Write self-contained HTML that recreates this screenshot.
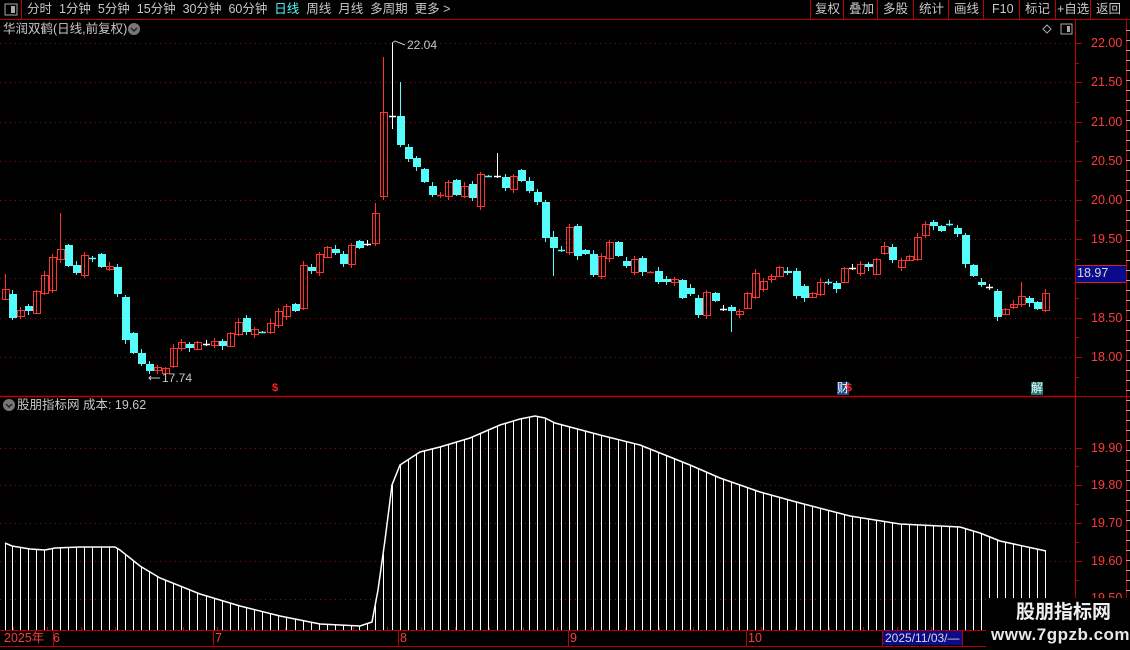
<!DOCTYPE html>
<html><head><meta charset="utf-8">
<style>
html,body{margin:0;padding:0;background:#000;}
body{width:1130px;height:650px;overflow:hidden;position:relative;font-family:"Liberation Sans","Noto Sans CJK SC",sans-serif;}
.t{position:absolute;white-space:nowrap;font-size:12px;line-height:14px;}
svg{position:absolute;left:0;top:0;}
</style></head><body>
<svg id="s" width="1130" height="650" xmlns="http://www.w3.org/2000/svg"></svg>

<div class="t" style="left:27px;top:2px;color:#c8c8c8;font-size:12.5px;word-spacing:0">分时&nbsp; 1分钟&nbsp; 5分钟&nbsp; 15分钟&nbsp; 30分钟&nbsp; 60分钟&nbsp; <span style="color:#54fcfc">日线</span>&nbsp; 周线&nbsp; 月线&nbsp; 多周期&nbsp; 更多 &gt;</div>
<div class="t" style="left:815px;top:2px;color:#c8c8c8;font-size:12.5px">复权</div>
<div class="t" style="left:849px;top:2px;color:#c8c8c8;font-size:12.5px">叠加</div>
<div class="t" style="left:883px;top:2px;color:#c8c8c8;font-size:12.5px">多股</div>
<div class="t" style="left:919px;top:2px;color:#c8c8c8;font-size:12.5px">统计</div>
<div class="t" style="left:954px;top:2px;color:#c8c8c8;font-size:12.5px">画线</div>
<div class="t" style="left:992px;top:2px;color:#c8c8c8;font-size:12.5px">F10</div>
<div class="t" style="left:1025px;top:2px;color:#c8c8c8;font-size:12.5px">标记</div>
<div class="t" style="left:1057px;top:2px;color:#c8c8c8;font-size:12.5px">+自选</div>
<div class="t" style="left:1096px;top:2px;color:#c8c8c8;font-size:12.5px">返回</div>

<div class="t" style="left:3px;top:22px;color:#c8c8c8;font-size:12.5px">华润双鹤(日线,前复权)</div>
<div class="t" style="left:17px;top:398px;color:#c8c8c8;font-size:12.5px">股朋指标网 成本: 19.62</div>

<div class="t" style="left:407px;top:38px;color:#c8c8c8;font-size:12px">22.04</div>
<div class="t" style="left:162px;top:371px;color:#c8c8c8;font-size:12px">17.74</div>

<div class="t" style="left:1091px;top:36px;color:#ff3b3b;font-size:12.5px">22.00</div>
<div class="t" style="left:1091px;top:75px;color:#ff3b3b;font-size:12.5px">21.50</div>
<div class="t" style="left:1091px;top:115px;color:#ff3b3b;font-size:12.5px">21.00</div>
<div class="t" style="left:1091px;top:154px;color:#ff3b3b;font-size:12.5px">20.50</div>
<div class="t" style="left:1091px;top:193px;color:#ff3b3b;font-size:12.5px">20.00</div>
<div class="t" style="left:1091px;top:232px;color:#ff3b3b;font-size:12.5px">19.50</div>
<div class="t" style="left:1091px;top:311px;color:#ff3b3b;font-size:12.5px">18.50</div>
<div class="t" style="left:1091px;top:350px;color:#ff3b3b;font-size:12.5px">18.00</div>
<div style="position:absolute;left:1076px;top:265px;width:50px;height:16px;background:#0a0a8a;border-top:1px solid #d02020;border-bottom:1px solid #d02020"></div>
<div class="t" style="left:1077px;top:266px;color:#d8d8d8;font-size:12.5px">18.97</div>

<div class="t" style="left:1091px;top:441px;color:#ff3b3b;font-size:12.5px">19.90</div>
<div class="t" style="left:1091px;top:478px;color:#ff3b3b;font-size:12.5px">19.80</div>
<div class="t" style="left:1091px;top:516px;color:#ff3b3b;font-size:12.5px">19.70</div>
<div class="t" style="left:1091px;top:554px;color:#ff3b3b;font-size:12.5px">19.60</div>
<div class="t" style="left:1091px;top:591px;color:#ff3b3b;font-size:12.5px">19.50</div>

<div style="position:absolute;left:986px;top:598px;width:144px;height:52px;background:#000"></div>
<div class="t" style="left:1016px;top:602px;color:#f0f0f0;font-size:19px;line-height:22px;font-weight:bold">股朋指标网</div>
<div class="t" style="left:991px;top:625px;color:#e8e8e8;font-size:17px;line-height:20px;font-weight:bold;letter-spacing:0.5px">www.7gpzb.com</div>

<div class="t" style="left:4px;top:631px;color:#ff3b3b;font-size:12.5px">2025年</div>
<div class="t" style="left:53px;top:631px;color:#ff3b3b;font-size:12.5px">6</div>
<div class="t" style="left:215px;top:631px;color:#ff3b3b;font-size:12.5px">7</div>
<div class="t" style="left:400px;top:631px;color:#ff3b3b;font-size:12.5px">8</div>
<div class="t" style="left:570px;top:631px;color:#ff3b3b;font-size:12.5px">9</div>
<div class="t" style="left:748px;top:631px;color:#ff3b3b;font-size:12.5px">10</div>
<div style="position:absolute;left:883px;top:631px;width:79px;height:14px;background:#0a0a8a"></div>
<div class="t" style="left:885px;top:631px;color:#d8d8d8;font-size:12px">2025/11/03/—</div>

<div class="t" style="left:272px;top:381px;color:#ff2020;font-size:11px;font-weight:bold">$</div>
<div class="t" style="left:837px;top:382px;color:#fff;font-size:12px;background:#1a4a8a;line-height:13px">财</div>
<div class="t" style="left:846px;top:381px;color:#ff2020;font-size:11px;font-weight:bold">$</div>
<div class="t" style="left:1031px;top:382px;color:#fff;font-size:12px;background:#1a7a7a;line-height:13px">解</div>

<script>
var s=document.getElementById('s'),h='';
function L(x1,y1,x2,y2,c,w,d){h+='<line x1="'+x1+'" y1="'+y1+'" x2="'+x2+'" y2="'+y2+'" stroke="'+c+'" stroke-width="'+(w||1)+'"'+(d?' stroke-dasharray="'+d+'"':'')+'/>';}
function R(x,y,w,hh,f,st){h+='<rect x="'+x+'" y="'+y+'" width="'+w+'" height="'+hh+'" fill="'+f+'"'+(st?' stroke="'+st+'" stroke-width="1"':'')+'/>';}
var RED='#c00000';
L(0,19.5,1130,19.5,RED);
L(21.5,0,21.5,19,RED);
[810,843,877,913,948,983,1019,1055,1090].forEach(function(x){L(x+.5,0,x+.5,19,RED);});
R(5,4,12,11,'none','#aaa');R(11,6,4,7,'#aaa');
h+='<circle cx="134" cy="29" r="6" fill="#777"/><path d="M131 28 L134 31 L137 28" stroke="#222" stroke-width="1.5" fill="none"/>';
h+='<circle cx="9" cy="405" r="6" fill="#777"/><path d="M6 404 L9 407 L12 404" stroke="#222" stroke-width="1.5" fill="none"/>';
h+='<path d="M1047 25 L1051 29 L1047 33 L1043 29 Z" stroke="#aaa" fill="none"/>';
R(1061,24,11,10,'none','#aaa');R(1067,26,3,6,'#aaa');
L(1075.5,20,1075.5,650,RED);L(1126.5,20,1126.5,650,RED);
L(0,396.5,1075,396.5,RED,1.5);L(1075,396.5,1130,396.5,RED);
L(0,630.5,1075,630.5,RED);L(0,646.5,1075,646.5,RED);
[43,82,122,161,200,239,278,318,357].forEach(function(y){L(0,y+.5,1075,y+.5,'#8a1010',1,'1,4');L(1075,y+.5,1082,y+.5,RED);});
[63,102,141,180,220,259,298,337,377].forEach(function(y){L(1075,y+.5,1079,y+.5,RED);});
[448,485,523,561,599].forEach(function(y){L(0,y+.5,1075,y+.5,'#8a1010',1,'1,4');L(1075,y+.5,1082,y+.5,RED);});
[466,504,542,580].forEach(function(y){L(1075,y+.5,1079,y+.5,RED);});
for(var y=30;y<650;y+=10)L(1126,y+.5,1130,y+.5,'#aaa');
[53,213,398,568,746,882,962].forEach(function(x){L(x+.5,630,x+.5,646,RED);});
for(var x=13;x<1075;x+=34)L(x+.5,627,x+.5,630,RED);
var C=[[5,289,299,'r',274],[12,294,318,'c'],[20,310,316,'r'],[28,306,311,'c'],[36,291,313,'r'],[44,275,293,'r'],[52,257,290,'r'],[60,249,259,'r',213],[68,245,266,'c'],[76,265,273,'c'],[84,255,275,'r'],[92,258,258,'c'],[101,254,267,'c'],[109,266,269,'r'],[117,267,294,'c'],[125,297,340,'c'],[133,333,353,'c'],[141,353,364,'c'],[149,364,371,'c'],[157,367,370,'r'],[165,368,373,'r'],[173,348,366,'r'],[181,342,348,'r'],[189,344,348,'c'],[197,342,349,'r'],[206,344,344,'w'],[214,341,345,'r'],[222,341,346,'c'],[230,333,346,'r'],[238,322,334,'r'],[246,318,332,'c'],[254,329,334,'r'],[262,332,332,'c'],[270,323,332,'r'],[278,311,325,'r'],[286,306,316,'r'],[295,304,311,'c'],[303,265,308,'r'],[311,267,271,'c'],[319,254,272,'r'],[327,247,257,'r'],[335,249,253,'c'],[343,254,264,'c'],[351,245,264,'r'],[359,241,248,'c'],[367,244,244,'w'],[375,213,243,'r',203],[383,112,196,'r',57],[392,116,116,'w',43,129],[400,116,145,'c',82],[408,147,159,'c'],[416,158,167,'c'],[424,169,182,'c'],[432,186,195,'c'],[440,195,195,'r'],[448,182,196,'r'],[456,180,195,'c'],[464,186,196,'r'],[472,184,198,'c'],[480,174,206,'r'],[488,176,176,'c'],[497,176,176,'w',153],[505,177,188,'c'],[513,176,189,'r'],[521,170,181,'c'],[529,181,191,'c'],[537,192,202,'c'],[545,202,238,'c'],[553,237,248,'c',231,276],[561,250,250,'c'],[569,227,252,'r'],[577,226,256,'c'],[585,250,254,'c'],[593,254,275,'c'],[601,256,276,'r'],[609,242,258,'r'],[618,242,256,'c'],[626,261,266,'c'],[634,259,272,'r'],[642,258,272,'c'],[650,272,272,'r'],[658,271,282,'c'],[666,279,282,'c'],[674,279,282,'r'],[682,280,298,'c'],[690,288,294,'c'],[698,298,315,'c'],[706,292,315,'r'],[715,293,301,'c'],[723,309,309,'w'],[731,307,311,'c',305,332],[739,311,314,'r'],[747,293,308,'r'],[755,273,297,'r'],[763,281,289,'r'],[771,276,279,'r'],[779,267,276,'r'],[787,271,273,'c'],[796,271,296,'c'],[804,286,298,'c'],[812,293,297,'r'],[820,282,294,'r'],[828,282,282,'c'],[836,283,289,'c'],[844,268,282,'r'],[852,268,268,'w'],[860,264,273,'r'],[868,264,267,'c'],[876,259,274,'r'],[884,246,253,'r'],[892,247,260,'c'],[901,260,267,'r'],[909,256,260,'r'],[917,237,259,'r'],[925,224,235,'r'],[933,222,226,'c'],[941,226,231,'c'],[949,224,224,'c'],[957,228,234,'c'],[965,235,264,'c'],[973,265,276,'c'],[981,282,285,'c'],[989,287,287,'w'],[997,291,317,'c'],[1005,309,314,'r'],[1013,304,307,'r'],[1021,296,304,'r',282],[1029,298,303,'c'],[1037,302,309,'c'],[1045,293,310,'r']];
var col={r:'#ff3232',c:'#54fcfc',w:'#ffffff'};
C.forEach(function(k,i){
 var x=k[0],t=k[1],b=k[2],c=col[k[3]];
 var hi=k[4]||t-(1+(i*7)%4),lo=k[5]||b+(1+(i*5)%4);
 var cx=x+.5;
 L(cx,hi,cx,lo,c);
 if(b-t<2){L(x-3,t+.5,x+4,t+.5,c,1.5);}
 else if(k[3]=='r'){R(x-3+.5,t+.5,7,b-t,'none',c);}
 else R(x-3,t,8,b-t,c);
});
h+='<path d="M392 43 L395 41 L400 43 L405 45" stroke="#c8c8c8" fill="none"/>';
h+='<path d="M149 378 L160 378 M151 376 L149 378 L151 380" stroke="#c8c8c8" fill="none"/>';
var P=[[5,543],[12,546],[30,549],[45,550],[55,548],[80,547],[115,547],[120,550],[130,558],[140,566],[160,578],[200,594],[240,606],[280,616],[320,624],[360,626],[372,622],[378,590],[385,540],[392,485],[400,465],[420,452],[440,447],[470,438],[500,425],[520,419],[535,416],[545,418],[555,423],[600,435],[640,445],[690,465],[720,478],[760,492],[800,503],[850,516],[900,524],[960,527],[980,533],[1000,541],[1046,551]];
function cy(x){for(var i=0;i<P.length-1;i++){if(x>=P[i][0]&&x<=P[i+1][0]){var f=(x-P[i][0])/(P[i+1][0]-P[i][0]);return P[i][1]+f*(P[i+1][1]-P[i][1]);}}return 551;}
C.forEach(function(k){var x=k[0]+.5;L(x,cy(k[0]),x,630,'#fff',1);});
h+='<polyline points="'+P.map(function(p){return p.join(',');}).join(' ')+'" fill="none" stroke="#fff" stroke-width="1.5"/>';
s.innerHTML=h;
</script>
</body></html>
